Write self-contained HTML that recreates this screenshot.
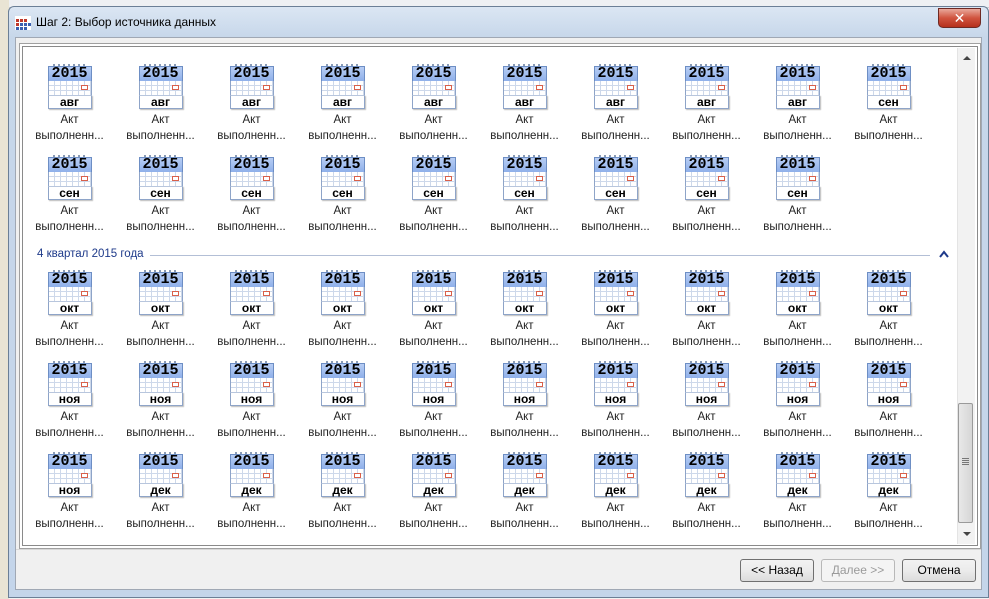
<!DOCTYPE html>
<html><head><meta charset="utf-8"><style>
*{margin:0;padding:0;box-sizing:border-box}
body{width:989px;height:599px;overflow:hidden;background:#f3f3f3;font-family:"Liberation Sans","DejaVu Sans",sans-serif;position:relative}
.bgtop{position:absolute;left:0;top:0;width:989px;height:8px;background:#eef0f3;border-bottom:1px solid #c8ccd2}
.bgleft{position:absolute;left:0;top:0;width:9px;height:599px;background:#e9e4d4}
.win{position:absolute;left:8px;top:6px;width:981px;height:592px;border:1px solid #6b7f96;border-radius:6px 6px 0 0;background:linear-gradient(#dbe6f3,#c7d7ea 30px,#c4d5ea);}
.title{position:absolute;left:36px;top:15px;font-size:12px;color:#000}
.ticon{position:absolute;left:15px;top:16px;width:16px;height:14px}
.close{position:absolute;left:938px;top:8px;width:43px;height:20px;border:1px solid #6e2a24;border-radius:0 0 5px 5px;background:linear-gradient(#e9a99b,#d0543f 50%,#b5301c);color:#fff;font-weight:bold;font-size:14px;text-align:center;line-height:18px}
.client{position:absolute;left:15px;top:37px;width:967px;height:553px;background:#f0f0f0;border:1px solid #a0a8b4}
.panel{position:absolute;left:22px;top:46px;width:956px;height:500px;border:1px solid #8a8a8a;background:#fff;box-shadow:0 0 0 2px #fff,0 0 0 3px #a0a0a0}
.sb{position:absolute;left:957px;top:48px;width:18px;height:496px;background:#f2f2f2;border-left:1px solid #e4e4e4}
.thumb{position:absolute;left:958px;top:403px;width:15px;height:120px;border:1px solid #9a9a9a;border-radius:2px;background:linear-gradient(90deg,#e8e8e8,#d6d6d6)}
.sep{position:absolute;left:16px;top:549px;width:965px;height:1px;background:#d8d8d8}
.btn{position:absolute;top:559px;width:74px;height:23px;border:1px solid #707070;border-radius:3px;background:linear-gradient(#f2f2f2,#ebebeb 50%,#dcdcdc);font-size:12px;text-align:center;line-height:21px;color:#000}
.it{position:absolute;width:91px;text-align:center;font-size:11.5px;color:#222;line-height:16px}
.ic{position:relative;width:44px;height:48px;margin:0 auto}
.rings{position:absolute;left:5px;top:0;width:34px;height:4px;background:repeating-linear-gradient(90deg,#8a9bb5 0 2px,transparent 2px 5px)}
.hd{position:absolute;left:0;top:2px;width:44px;height:16px;background:linear-gradient(#b7cdf4,#8fb0ea);border:1px solid #6d8ec4;font:bold 15px "Liberation Mono","DejaVu Sans Mono",monospace;color:#000;line-height:14px;text-align:center}
.gr{position:absolute;left:0;top:17px;width:44px;height:15px;border-left:1px solid #8ea4c8;border-right:1px solid #8ea4c8;background:#fff;background-image:repeating-linear-gradient(90deg,transparent 0 5px,#cdd8ea 5px 6px),repeating-linear-gradient(transparent 0 4px,#cdd8ea 4px 5px)}
.rd{position:absolute;left:33px;top:21px;width:7px;height:5px;border:1px solid #d9604a;background:#fff}
.mo{position:absolute;left:0;top:31px;width:44px;height:14px;background:#fff;border:1px solid #8ea4c8;border-top:1px solid #b8c6dd;font:bold 12px "Liberation Sans",sans-serif;line-height:12px;text-align:center;color:#000;box-shadow:1px 1px 1px #bbb}
.grp{position:absolute;left:37px;top:248px;font-size:11.5px;color:#1e3a8a}
.gline{position:absolute;left:150px;top:255px;width:780px;height:1px;background:#b3bfd6}
.caret{position:absolute;left:939px;top:250px;width:10px;height:8px}
</style></head><body>
<div class="bgtop"></div><div class="bgleft"></div>
<div class="win"></div>
<svg class="ticon" viewBox="0 0 16 14"><rect x="0" y="0" width="16" height="14" fill="#fff"/><g fill="#c0392b"><rect x="1" y="3" width="3" height="3"/><rect x="5" y="3" width="3" height="3"/><rect x="9" y="3" width="3" height="3"/><rect x="1" y="7" width="3" height="3"/></g><g fill="#3a5fb0"><rect x="5" y="7" width="3" height="3"/><rect x="9" y="7" width="3" height="3"/><rect x="13" y="7" width="3" height="3"/><rect x="1" y="11" width="3" height="3"/><rect x="5" y="11" width="3" height="3"/><rect x="9" y="11" width="3" height="3"/></g></svg>
<div class="title">Шаг 2: Выбор источника данных</div>
<div class="close">✕</div>
<div class="client"></div>
<div class="panel"></div>
<div class="sb"><div style="position:absolute;left:5px;top:8px;width:0;height:0;border-left:4px solid transparent;border-right:4px solid transparent;border-bottom:4px solid #444"></div><div style="position:absolute;left:5px;top:484px;width:0;height:0;border-left:4px solid transparent;border-right:4px solid transparent;border-top:4px solid #444"></div></div>
<div class="thumb"><div style="position:absolute;left:3px;top:54px;width:7px;height:7px;background:repeating-linear-gradient(#777 0 1px,transparent 1px 2px)"></div></div>
<div class="sep"></div>
<div class="btn" style="left:740px">&lt;&lt; Назад</div>
<div class="btn" style="left:821px;color:#9a9a9a;border-color:#b8b8b8;background:#f4f4f4">Далее &gt;&gt;</div>
<div class="btn" style="left:902px">Отмена</div>
<div class="grp">4 квартал 2015 года</div><div class="gline"></div>
<svg class="caret" viewBox="0 0 10 8"><path d="M1 7 L5 2 L9 7" stroke="#1e3a8a" stroke-width="2" fill="none"/></svg>

<div class="it" style="left:24px;top:64px"><div class="ic"><div class="rings"></div><div class="hd">2015</div><div class="gr"></div><div class="rd"></div><div class="mo">авг</div></div>Акт<br>выполненн...</div>
<div class="it" style="left:115px;top:64px"><div class="ic"><div class="rings"></div><div class="hd">2015</div><div class="gr"></div><div class="rd"></div><div class="mo">авг</div></div>Акт<br>выполненн...</div>
<div class="it" style="left:206px;top:64px"><div class="ic"><div class="rings"></div><div class="hd">2015</div><div class="gr"></div><div class="rd"></div><div class="mo">авг</div></div>Акт<br>выполненн...</div>
<div class="it" style="left:297px;top:64px"><div class="ic"><div class="rings"></div><div class="hd">2015</div><div class="gr"></div><div class="rd"></div><div class="mo">авг</div></div>Акт<br>выполненн...</div>
<div class="it" style="left:388px;top:64px"><div class="ic"><div class="rings"></div><div class="hd">2015</div><div class="gr"></div><div class="rd"></div><div class="mo">авг</div></div>Акт<br>выполненн...</div>
<div class="it" style="left:479px;top:64px"><div class="ic"><div class="rings"></div><div class="hd">2015</div><div class="gr"></div><div class="rd"></div><div class="mo">авг</div></div>Акт<br>выполненн...</div>
<div class="it" style="left:570px;top:64px"><div class="ic"><div class="rings"></div><div class="hd">2015</div><div class="gr"></div><div class="rd"></div><div class="mo">авг</div></div>Акт<br>выполненн...</div>
<div class="it" style="left:661px;top:64px"><div class="ic"><div class="rings"></div><div class="hd">2015</div><div class="gr"></div><div class="rd"></div><div class="mo">авг</div></div>Акт<br>выполненн...</div>
<div class="it" style="left:752px;top:64px"><div class="ic"><div class="rings"></div><div class="hd">2015</div><div class="gr"></div><div class="rd"></div><div class="mo">авг</div></div>Акт<br>выполненн...</div>
<div class="it" style="left:843px;top:64px"><div class="ic"><div class="rings"></div><div class="hd">2015</div><div class="gr"></div><div class="rd"></div><div class="mo">сен</div></div>Акт<br>выполненн...</div>
<div class="it" style="left:24px;top:155px"><div class="ic"><div class="rings"></div><div class="hd">2015</div><div class="gr"></div><div class="rd"></div><div class="mo">сен</div></div>Акт<br>выполненн...</div>
<div class="it" style="left:115px;top:155px"><div class="ic"><div class="rings"></div><div class="hd">2015</div><div class="gr"></div><div class="rd"></div><div class="mo">сен</div></div>Акт<br>выполненн...</div>
<div class="it" style="left:206px;top:155px"><div class="ic"><div class="rings"></div><div class="hd">2015</div><div class="gr"></div><div class="rd"></div><div class="mo">сен</div></div>Акт<br>выполненн...</div>
<div class="it" style="left:297px;top:155px"><div class="ic"><div class="rings"></div><div class="hd">2015</div><div class="gr"></div><div class="rd"></div><div class="mo">сен</div></div>Акт<br>выполненн...</div>
<div class="it" style="left:388px;top:155px"><div class="ic"><div class="rings"></div><div class="hd">2015</div><div class="gr"></div><div class="rd"></div><div class="mo">сен</div></div>Акт<br>выполненн...</div>
<div class="it" style="left:479px;top:155px"><div class="ic"><div class="rings"></div><div class="hd">2015</div><div class="gr"></div><div class="rd"></div><div class="mo">сен</div></div>Акт<br>выполненн...</div>
<div class="it" style="left:570px;top:155px"><div class="ic"><div class="rings"></div><div class="hd">2015</div><div class="gr"></div><div class="rd"></div><div class="mo">сен</div></div>Акт<br>выполненн...</div>
<div class="it" style="left:661px;top:155px"><div class="ic"><div class="rings"></div><div class="hd">2015</div><div class="gr"></div><div class="rd"></div><div class="mo">сен</div></div>Акт<br>выполненн...</div>
<div class="it" style="left:752px;top:155px"><div class="ic"><div class="rings"></div><div class="hd">2015</div><div class="gr"></div><div class="rd"></div><div class="mo">сен</div></div>Акт<br>выполненн...</div>
<div class="it" style="left:24px;top:270px"><div class="ic"><div class="rings"></div><div class="hd">2015</div><div class="gr"></div><div class="rd"></div><div class="mo">окт</div></div>Акт<br>выполненн...</div>
<div class="it" style="left:115px;top:270px"><div class="ic"><div class="rings"></div><div class="hd">2015</div><div class="gr"></div><div class="rd"></div><div class="mo">окт</div></div>Акт<br>выполненн...</div>
<div class="it" style="left:206px;top:270px"><div class="ic"><div class="rings"></div><div class="hd">2015</div><div class="gr"></div><div class="rd"></div><div class="mo">окт</div></div>Акт<br>выполненн...</div>
<div class="it" style="left:297px;top:270px"><div class="ic"><div class="rings"></div><div class="hd">2015</div><div class="gr"></div><div class="rd"></div><div class="mo">окт</div></div>Акт<br>выполненн...</div>
<div class="it" style="left:388px;top:270px"><div class="ic"><div class="rings"></div><div class="hd">2015</div><div class="gr"></div><div class="rd"></div><div class="mo">окт</div></div>Акт<br>выполненн...</div>
<div class="it" style="left:479px;top:270px"><div class="ic"><div class="rings"></div><div class="hd">2015</div><div class="gr"></div><div class="rd"></div><div class="mo">окт</div></div>Акт<br>выполненн...</div>
<div class="it" style="left:570px;top:270px"><div class="ic"><div class="rings"></div><div class="hd">2015</div><div class="gr"></div><div class="rd"></div><div class="mo">окт</div></div>Акт<br>выполненн...</div>
<div class="it" style="left:661px;top:270px"><div class="ic"><div class="rings"></div><div class="hd">2015</div><div class="gr"></div><div class="rd"></div><div class="mo">окт</div></div>Акт<br>выполненн...</div>
<div class="it" style="left:752px;top:270px"><div class="ic"><div class="rings"></div><div class="hd">2015</div><div class="gr"></div><div class="rd"></div><div class="mo">окт</div></div>Акт<br>выполненн...</div>
<div class="it" style="left:843px;top:270px"><div class="ic"><div class="rings"></div><div class="hd">2015</div><div class="gr"></div><div class="rd"></div><div class="mo">окт</div></div>Акт<br>выполненн...</div>
<div class="it" style="left:24px;top:361px"><div class="ic"><div class="rings"></div><div class="hd">2015</div><div class="gr"></div><div class="rd"></div><div class="mo">ноя</div></div>Акт<br>выполненн...</div>
<div class="it" style="left:115px;top:361px"><div class="ic"><div class="rings"></div><div class="hd">2015</div><div class="gr"></div><div class="rd"></div><div class="mo">ноя</div></div>Акт<br>выполненн...</div>
<div class="it" style="left:206px;top:361px"><div class="ic"><div class="rings"></div><div class="hd">2015</div><div class="gr"></div><div class="rd"></div><div class="mo">ноя</div></div>Акт<br>выполненн...</div>
<div class="it" style="left:297px;top:361px"><div class="ic"><div class="rings"></div><div class="hd">2015</div><div class="gr"></div><div class="rd"></div><div class="mo">ноя</div></div>Акт<br>выполненн...</div>
<div class="it" style="left:388px;top:361px"><div class="ic"><div class="rings"></div><div class="hd">2015</div><div class="gr"></div><div class="rd"></div><div class="mo">ноя</div></div>Акт<br>выполненн...</div>
<div class="it" style="left:479px;top:361px"><div class="ic"><div class="rings"></div><div class="hd">2015</div><div class="gr"></div><div class="rd"></div><div class="mo">ноя</div></div>Акт<br>выполненн...</div>
<div class="it" style="left:570px;top:361px"><div class="ic"><div class="rings"></div><div class="hd">2015</div><div class="gr"></div><div class="rd"></div><div class="mo">ноя</div></div>Акт<br>выполненн...</div>
<div class="it" style="left:661px;top:361px"><div class="ic"><div class="rings"></div><div class="hd">2015</div><div class="gr"></div><div class="rd"></div><div class="mo">ноя</div></div>Акт<br>выполненн...</div>
<div class="it" style="left:752px;top:361px"><div class="ic"><div class="rings"></div><div class="hd">2015</div><div class="gr"></div><div class="rd"></div><div class="mo">ноя</div></div>Акт<br>выполненн...</div>
<div class="it" style="left:843px;top:361px"><div class="ic"><div class="rings"></div><div class="hd">2015</div><div class="gr"></div><div class="rd"></div><div class="mo">ноя</div></div>Акт<br>выполненн...</div>
<div class="it" style="left:24px;top:452px"><div class="ic"><div class="rings"></div><div class="hd">2015</div><div class="gr"></div><div class="rd"></div><div class="mo">ноя</div></div>Акт<br>выполненн...</div>
<div class="it" style="left:115px;top:452px"><div class="ic"><div class="rings"></div><div class="hd">2015</div><div class="gr"></div><div class="rd"></div><div class="mo">дек</div></div>Акт<br>выполненн...</div>
<div class="it" style="left:206px;top:452px"><div class="ic"><div class="rings"></div><div class="hd">2015</div><div class="gr"></div><div class="rd"></div><div class="mo">дек</div></div>Акт<br>выполненн...</div>
<div class="it" style="left:297px;top:452px"><div class="ic"><div class="rings"></div><div class="hd">2015</div><div class="gr"></div><div class="rd"></div><div class="mo">дек</div></div>Акт<br>выполненн...</div>
<div class="it" style="left:388px;top:452px"><div class="ic"><div class="rings"></div><div class="hd">2015</div><div class="gr"></div><div class="rd"></div><div class="mo">дек</div></div>Акт<br>выполненн...</div>
<div class="it" style="left:479px;top:452px"><div class="ic"><div class="rings"></div><div class="hd">2015</div><div class="gr"></div><div class="rd"></div><div class="mo">дек</div></div>Акт<br>выполненн...</div>
<div class="it" style="left:570px;top:452px"><div class="ic"><div class="rings"></div><div class="hd">2015</div><div class="gr"></div><div class="rd"></div><div class="mo">дек</div></div>Акт<br>выполненн...</div>
<div class="it" style="left:661px;top:452px"><div class="ic"><div class="rings"></div><div class="hd">2015</div><div class="gr"></div><div class="rd"></div><div class="mo">дек</div></div>Акт<br>выполненн...</div>
<div class="it" style="left:752px;top:452px"><div class="ic"><div class="rings"></div><div class="hd">2015</div><div class="gr"></div><div class="rd"></div><div class="mo">дек</div></div>Акт<br>выполненн...</div>
<div class="it" style="left:843px;top:452px"><div class="ic"><div class="rings"></div><div class="hd">2015</div><div class="gr"></div><div class="rd"></div><div class="mo">дек</div></div>Акт<br>выполненн...</div>
</body></html>
